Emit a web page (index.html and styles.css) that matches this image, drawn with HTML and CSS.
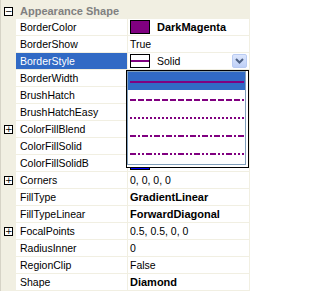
FILE: index.html
```
<!DOCTYPE html>
<html>
<head>
<meta charset="utf-8">
<link rel="stylesheet" href="styles.css">
</head>
<body>
<div class="grid">
  <div class="cat">
    <div class="margin"><span class="box">&minus;</span></div>
    <div class="cat-label">Appearance Shape</div>
  </div>
  <div class="row"><div class="margin"></div><div class="name">BorderColor</div><div class="value"><span class="swatch magenta"></span><b class="bold">DarkMagenta</b></div></div>
  <div class="row"><div class="margin"></div><div class="name">BorderShow</div><div class="value">True</div></div>
  <div class="row"><div class="margin"></div><div class="name selected">BorderStyle</div><div class="value"><span class="swatch preview"><span class="preview-line"></span></span><span class="val-text">Solid</span><span class="drop-btn"><svg width="9" height="6" viewBox="0 0 9 6"><polyline points="1,1 4.5,4.5 8,1" fill="none" stroke="#4d6185" stroke-width="2"/></svg></span></div></div>
  <div class="row"><div class="margin"></div><div class="name">BorderWidth</div><div class="value"></div></div>
  <div class="row"><div class="margin"></div><div class="name">BrushHatch</div><div class="value"></div></div>
  <div class="row"><div class="margin"></div><div class="name">BrushHatchEasy</div><div class="value"></div></div>
  <div class="row"><div class="margin"><span class="box">+</span></div><div class="name">ColorFillBlend</div><div class="value"></div></div>
  <div class="row"><div class="margin"></div><div class="name">ColorFillSolid</div><div class="value"></div></div>
  <div class="row"><div class="margin"></div><div class="name">ColorFillSolidB</div><div class="value"><span class="swatch blue"></span></div></div>
  <div class="row"><div class="margin"><span class="box">+</span></div><div class="name">Corners</div><div class="value">0, 0, 0, 0</div></div>
  <div class="row"><div class="margin"></div><div class="name">FillType</div><div class="value"><b class="bold">GradientLinear</b></div></div>
  <div class="row"><div class="margin"></div><div class="name">FillTypeLinear</div><div class="value"><b class="bold">ForwardDiagonal</b></div></div>
  <div class="row"><div class="margin"><span class="box">+</span></div><div class="name">FocalPoints</div><div class="value">0.5, 0.5, 0, 0</div></div>
  <div class="row"><div class="margin"></div><div class="name">RadiusInner</div><div class="value">0</div></div>
  <div class="row"><div class="margin"></div><div class="name">RegionClip</div><div class="value">False</div></div>
  <div class="row"><div class="margin"></div><div class="name">Shape</div><div class="value"><b class="bold">Diamond</b></div></div>

  <div class="dropdown">
    <div class="list">
      <div class="item active"><svg width="114" height="18"><line x1="0" y1="10" x2="114" y2="10" stroke="#800080" stroke-width="2"/></svg></div>
      <div class="item"><svg width="114" height="18"><line x1="0" y1="10" x2="114" y2="10" stroke="#800080" stroke-width="2" stroke-dasharray="6 2"/></svg></div>
      <div class="item"><svg width="114" height="18"><line x1="0" y1="10" x2="114" y2="10" stroke="#800080" stroke-width="2" stroke-dasharray="2 2"/></svg></div>
      <div class="item"><svg width="114" height="18"><line x1="0" y1="10" x2="114" y2="10" stroke="#800080" stroke-width="2" stroke-dasharray="6 2 2 2"/></svg></div>
      <div class="item"><svg width="114" height="18"><line x1="0" y1="10" x2="114" y2="10" stroke="#800080" stroke-width="2" stroke-dasharray="6 2 2 2 2 2"/></svg></div>
    </div>
  </div>
</div>
</body>
</html>
```

FILE: styles.css
```
html, body {
  margin: 0;
  padding: 0;
  background: #ffffff;
  overflow: hidden;
}
body {
  font-family: "Liberation Sans", Arial, sans-serif;
  font-size: 10.5px;
  color: #000000;
}
.grid {
  position: relative;
  width: 250px;
  height: 291px;
  box-sizing: border-box;
  background: #f1efe2;
  border-left: 1px solid #d6d3c6;
  padding-right: 1px;
}
.cat {
  display: flex;
  height: 19px;
}
.margin {
  width: 15px;
  flex: none;
  display: flex;
  align-items: center;
  padding-left: 3px;
  box-sizing: border-box;
}
.cat .margin {
  align-items: flex-start;
  padding-top: 7px;
}
.box {
  width: 9px;
  height: 9px;
  box-sizing: border-box;
  border: 1px solid #000;
  background: #fff;
  font-size: 9px;
  line-height: 7px;
  text-align: center;
  font-family: "DejaVu Sans", sans-serif;
  font-weight: normal;
  display: block;
}
.cat-label {
  padding: 3px 0 0 4px;
  font-weight: bold;
  font-size: 11px;
  line-height: 16px;
  color: #808080;
}
.row {
  display: flex;
  height: 16px;
  margin-bottom: 1px;
}
.row:last-of-type {
  margin-bottom: 0;
}
.name {
  width: 111px;
  margin-right: 1px;
  background: #fff;
  padding-left: 4px;
  box-sizing: border-box;
  line-height: 16px;
  white-space: nowrap;
  overflow: hidden;
}
.name.selected {
  background: #316ac5;
  color: #fff;
}
.value {
  width: 121px;
  background: #fff;
  padding-left: 2px;
  box-sizing: border-box;
  display: flex;
  align-items: center;
  white-space: nowrap;
  line-height: 16px;
}
.bold {
  font-weight: bold;
  font-size: 11px;
}
.swatch {
  width: 20px;
  height: 14px;
  box-sizing: border-box;
  border: 1px solid #000;
  margin-right: 7px;
  flex: none;
  display: flex;
  align-items: center;
}
.magenta { background: #800080; }
.blue { background: #0000ff; }
.preview { background: #fff; }
.preview-line {
  display: block;
  width: 100%;
  height: 2px;
  background: #800080;
}
.val-text { flex: 1; }
.drop-btn {
  width: 15px;
  height: 14px;
  margin-right: 2px;
  box-sizing: border-box;
  border: 1px solid #b9cbf3;
  border-radius: 2px;
  background: linear-gradient(#dce6fc, #bfd0f7);
  display: flex;
  align-items: center;
  justify-content: center;
}
.dropdown {
  position: absolute;
  left: 125px;
  top: 70px;
  width: 123px;
  height: 98px;
  box-sizing: border-box;
  border: 1px solid #000;
  background: #fff;
  padding: 0 2px 2px 0;
}
.list {
  border: 1px solid #7f9db9;
  padding-bottom: 2px;
}
.item {
  height: 18px;
  padding-left: 2px;
  display: flex;
}
.item.active {
  background: #316ac5;
}
```
